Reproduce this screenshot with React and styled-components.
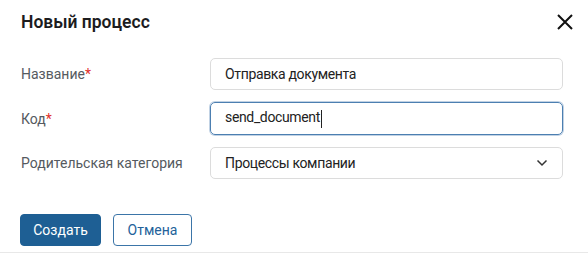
import React from "react";
import styled, { createGlobalStyle } from "styled-components";

const Global = createGlobalStyle`
  html, body { margin: 0; padding: 0; background: #fff; }
  body { font-family: Roboto, "Liberation Sans", sans-serif; color: #222; }
  * { box-sizing: border-box; }
`;

const Dialog = styled.div`
  width: 588px;
  height: 253px;
  display: flex;
  flex-direction: column;
  border-bottom: 1px solid #e8e8e8;
`;

const Header = styled.div`
  display: flex;
  align-items: center;
  justify-content: space-between;
  padding: 6px 14px 0 21px;
  height: 38px;
`;

const Title = styled.h1`
  margin: 0;
  font-size: 17.5px;
  font-weight: 600;
  color: #1c1c1e;
`;

const Close = styled.button`
  border: 0;
  background: none;
  padding: 0;
  width: 18px;
  height: 18px;
  display: flex;
  align-items: center;
  justify-content: center;
  cursor: pointer;
`;

const Form = styled.div`
  display: grid;
  grid-template-columns: 189px 353px;
  row-gap: 12px;
  padding: 20px 0 0 21px;
  align-items: center;
`;

const Label = styled.label`
  font-size: 14px;
  color: #555a60;
`;

const Req = styled.span`
  color: #e0302b;
`;

const Field = styled.div`
  height: ${(p) => (p.$focused ? "33px" : "32px")};
  border: 1px solid ${(p) => (p.$focused ? "#4c7fb1" : "#dcdcdc")};
  box-shadow: ${(p) => (p.$focused ? "0 0 0 1px rgba(76,127,177,0.35)" : "none")};
  border-radius: 5px;
  display: flex;
  align-items: center;
  justify-content: space-between;
  padding: 0 14px 0 14px;
  font-size: 14px;
  letter-spacing: -0.35px;
  color: #222;
`;

const Caret = styled.span`
  display: inline-block;
  width: 1px;
  height: 18px;
  background: #222;
  vertical-align: middle;
  margin-left: 1px;
`;

const Actions = styled.div`
  display: flex;
  gap: 12px;
  padding: 35px 0 0 20px;
`;

const Button = styled.button`
  height: 32px;
  width: ${(p) => (p.$primary ? "81px" : "79px")};
  padding: 0;
  border-radius: 4px;
  font-family: inherit;
  font-size: 14px;
  border: 1px solid ${(p) => (p.$primary ? "#1e5f94" : "#3b75a8")};
  background: ${(p) => (p.$primary ? "#1e5f94" : "#fff")};
  color: ${(p) => (p.$primary ? "#fff" : "#23629a")};
`;

export default function App() {
  return (
    <>
      <Global />
      <Dialog>
        <Header>
          <Title>Новый процесс</Title>
          <Close aria-label="Закрыть">
            <svg width="16" height="16" viewBox="0 0 16 16">
              <path d="M1 1L15 15M15 1L1 15" stroke="#111" strokeWidth="2" />
            </svg>
          </Close>
        </Header>
        <Form>
          <Label>
            Название<Req>*</Req>
          </Label>
          <Field>Отправка документа</Field>
          <Label>
            Код<Req>*</Req>
          </Label>
          <Field $focused>
            <span>
              send_document<Caret />
            </span>
          </Field>
          <Label>Родительская категория</Label>
          <Field>
            <span>Процессы компании</span>
            <svg width="12" height="8" viewBox="0 0 12 8">
              <path d="M1.5 1.5L6 6L10.5 1.5" fill="none" stroke="#333" strokeWidth="1.5" />
            </svg>
          </Field>
        </Form>
        <Actions>
          <Button $primary>Создать</Button>
          <Button>Отмена</Button>
        </Actions>
      </Dialog>
    </>
  );
}
